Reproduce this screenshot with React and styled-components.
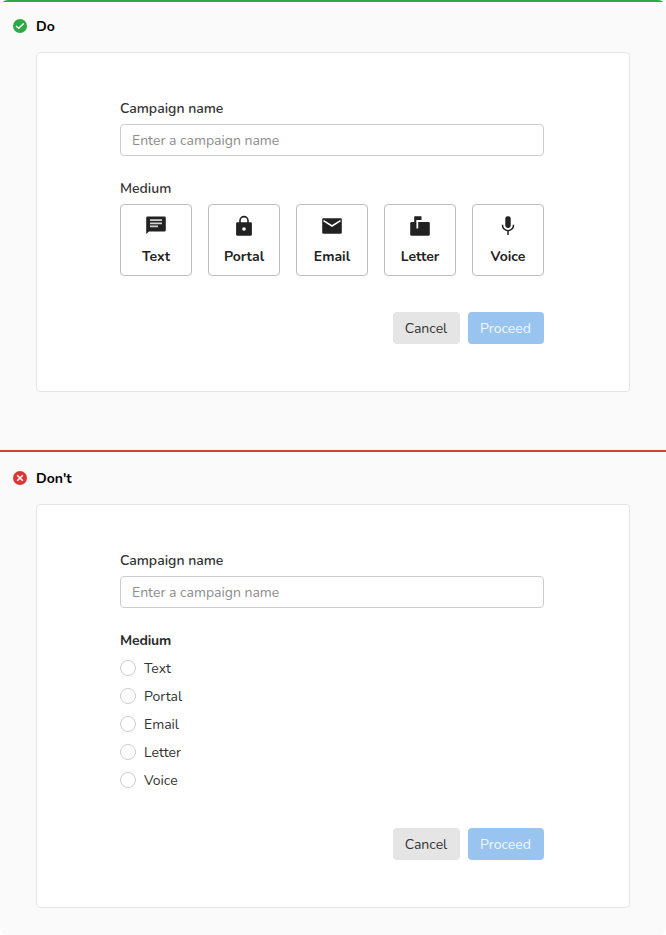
import React from 'react';
import styled, { createGlobalStyle } from 'styled-components';

const GlobalStyle = createGlobalStyle`
  *, *::before, *::after { box-sizing: border-box; }
  body {
    margin: 0;
    background: #fff;
    font-family: Nunito, Lato, sans-serif;
    font-size: 14px;
    line-height: 20px;
    color: #333;
  }
`;

const Page = styled.main`
  width: 666px;
  height: 935px;
  overflow: hidden;
  border-radius: 8px;
  background: #fafafa;
`;

const Example = styled.section`
  height: ${({ $height }) => $height}px;
  border-top: 2px solid ${({ $color }) => $color};
  padding: ${({ $top }) => $top}px 36px 0;
`;

const Heading = styled.header`
  display: flex;
  align-items: center;
  gap: 9px;
  height: 20px;
  margin: 0 0 16px -23px;
`;

const Title = styled.h2`
  margin: 0;
  padding-top: 2px;
  font-size: 14px;
  line-height: 20px;
  font-weight: 700;
  color: #000;
`;

const Panel = styled.div`
  height: ${({ $height }) => $height}px;
  padding: 46px 85px 0 83px;
  border: 1px solid #e4e4e4;
  border-radius: 4px;
  background: #fff;
`;

const Label = styled.div`
  margin-bottom: 5px;
  font-weight: ${({ $strong }) => ($strong ? 700 : 600)};
  color: ${({ $strong }) => ($strong ? '#2b2b2b' : '#333')};
  letter-spacing: ${({ $strong }) => ($strong ? '-0.15px' : 'normal')};
`;

const Input = styled.input`
  display: block;
  width: 100%;
  height: 32px;
  margin-bottom: 23px;
  padding: 0 11px;
  border: 1px solid #ccc;
  border-radius: 4px;
  background: #fff;
  font: inherit;
  outline: none;
  &::placeholder { color: #8c8c8c; opacity: 1; }
`;

const Cards = styled.div`
  display: flex;
  gap: 16px;
`;

const Card = styled.button`
  display: flex;
  flex-direction: column;
  align-items: center;
  gap: 9px;
  width: 72px;
  height: 72px;
  padding: 9px 0 0;
  border: 1px solid #bdbdbd;
  border-radius: 4px;
  background: #fff;
  font: inherit;
  font-weight: 700;
  color: #222;
`;

const Icon = styled.svg`
  display: block;
  flex: none;
  width: 24px;
  height: 24px;
`;

const Radios = styled.div`
  display: flex;
  flex-direction: column;
  gap: 8px;
  padding-top: 2px;
`;

const RadioRow = styled.label`
  display: flex;
  align-items: center;
  gap: 8px;
  height: 20px;
  color: #333;
`;

const RadioText = styled.span`
  padding-top: 2px;
`;

const Radio = styled.input.attrs({ type: 'radio' })`
  appearance: none;
  width: 16px;
  height: 16px;
  margin: 0;
  border: 1px solid #ccc;
  border-radius: 50%;
  background: #fff;
`;

const Actions = styled.div`
  display: flex;
  justify-content: flex-end;
  gap: 8px;
  margin-top: ${({ $top }) => $top}px;
`;

const Button = styled.button`
  width: ${({ $primary }) => ($primary ? 76 : 67)}px;
  height: 32px;
  padding: 2px 1px 0 0;
  border: 0;
  border-radius: 4px;
  background: ${({ $primary }) => ($primary ? '#99c4f0' : '#e5e5e5')};
  color: ${({ $primary }) => ($primary ? '#f0f7fe' : '#333')};
  font: inherit;
`;

const media = [
  {
    name: 'Text',
    art: (
      <>
        <path fill="#222" d="M3.6 2.4h16.8a1.4 1.4 0 0 1 1.4 1.4v12.4a1.4 1.4 0 0 1-1.4 1.4H5L2.2 20V3.8a1.4 1.4 0 0 1 1.4-1.4z" />
        <path stroke="#fff" strokeOpacity=".8" strokeWidth="1.7" d="M6 6.2h12M6 9.3h12M6 12.4h8" />
      </>
    ),
  },
  {
    name: 'Portal',
    art: (
      <>
        <rect x="4.1" y="8.2" width="15.8" height="13.6" rx="1.4" fill="#222" />
        <path stroke="#222" strokeWidth="1.6" d="M8 9V6.6a4 4 0 0 1 8 0V9" />
        <circle cx="12" cy="15" r="1.8" fill="#fff" />
      </>
    ),
  },
  {
    name: 'Email',
    art: (
      <>
        <rect x="2.2" y="4.2" width="19.6" height="15.6" rx="1.4" fill="#222" />
        <path stroke="#fff" strokeWidth="1.5" d="M3.5 6.6 12 12l8.5-5.4" />
      </>
    ),
  },
  {
    name: 'Letter',
    art: (
      <>
        <rect x="2.2" y="8" width="19.6" height="13.8" rx="1.4" fill="#222" />
        <path fill="#fff" d="M8.2 6.2h2v8.2h-2z" />
        <path fill="#222" d="M6.2 14V2.8q0-.5.5-.5h6.8V6H8.3v8z" />
      </>
    ),
  },
  {
    name: 'Voice',
    art: (
      <>
        <rect x="9.3" y="2.2" width="5.4" height="11.8" rx="2.4" fill="#222" />
        <path stroke="#222" strokeWidth="1.5" d="M6.5 10.8v.4a5.5 5.5 0 0 0 11 0v-.4M12 16.8V21" />
      </>
    ),
  },
];

function StatusIcon({ ok }) {
  return (
    <svg width="14" height="14" viewBox="0 0 14 14" fill="none" aria-hidden="true">
      <circle cx="7" cy="7" r="7" fill={ok ? '#2eaa43' : '#de3636'} />
      <path
        d={ok ? 'M3 6.9 5.7 9.3 10.7 4.4' : 'M4.2 4.2 9.8 9.8M9.8 4.2 4.2 9.8'}
        stroke="#fff"
        strokeWidth={ok ? 1.4 : 1.6}
      />
    </svg>
  );
}

function CampaignField() {
  return (
    <>
      <Label>Campaign name</Label>
      <Input placeholder="Enter a campaign name" />
    </>
  );
}

function FormActions({ top }) {
  return (
    <Actions $top={top}>
      <Button>Cancel</Button>
      <Button $primary>Proceed</Button>
    </Actions>
  );
}

export default function App() {
  return (
    <>
      <GlobalStyle />
      <Page>
        <Example $height={450} $top={14} $color="#2eaa43">
          <Heading>
            <StatusIcon ok />
            <Title>Do</Title>
          </Heading>
          <Panel $height={340}>
            <CampaignField />
            <Label>Medium</Label>
            <Cards>
              {media.map(({ name, art }) => (
                <Card key={name}>
                  <Icon viewBox="0 0 24 24" fill="none" aria-hidden="true">{art}</Icon>
                  {name}
                </Card>
              ))}
            </Cards>
            <FormActions top={36} />
          </Panel>
        </Example>
        <Example $height={485} $top={16} $color="#de3636">
          <Heading>
            <StatusIcon />
            <Title>Don't</Title>
          </Heading>
          <Panel $height={404}>
            <CampaignField />
            <Label $strong>Medium</Label>
            <Radios>
              {media.map(({ name }) => (
                <RadioRow key={name}>
                  <Radio name="medium" />
                  <RadioText>{name}</RadioText>
                </RadioRow>
              ))}
            </Radios>
            <FormActions top={38} />
          </Panel>
        </Example>
      </Page>
    </>
  );
}
